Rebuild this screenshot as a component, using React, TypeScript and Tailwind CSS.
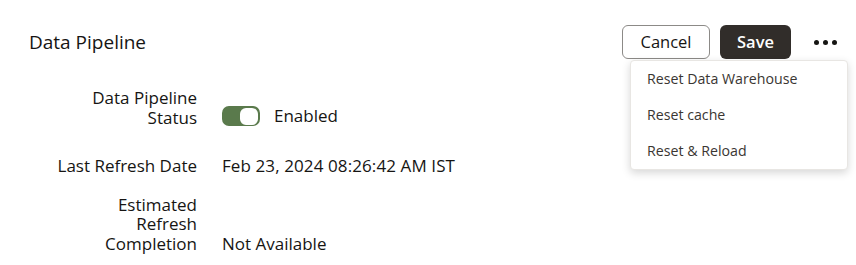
import React from "react";

const menuItems = ["Reset Data Warehouse", "Reset cache", "Reset & Reload"];

export default function App() {
  return (
    <div
      className="relative w-[856px] h-[265px] bg-white text-[#161513] overflow-hidden"
      style={{ fontFamily: '"Open Sans", "Noto Sans", sans-serif' }}
    >
      {/* Header */}
      <header className="flex items-center justify-between pl-[29px] pr-[13px] pt-[25px]">
        <h1 className="text-[19px] leading-[34px]">Data Pipeline</h1>
        <div className="flex items-center">
          <button className="h-[34px] w-[88px] rounded-[6px] border border-[#8c8a87] text-[16.5px] leading-none">
            Cancel
          </button>
          <button className="ml-[10px] h-[34px] w-[71px] rounded-[6px] bg-[#312d2a] text-white text-[16.5px] font-semibold leading-none">
            Save
          </button>
          <button className="ml-[16px] flex h-[34px] w-[36px] items-center justify-center gap-[4px]">
            <span className="h-[5px] w-[5px] rounded-full bg-[#161513]" />
            <span className="h-[5px] w-[5px] rounded-full bg-[#161513]" />
            <span className="h-[5px] w-[5px] rounded-full bg-[#161513]" />
          </button>
        </div>
      </header>

      {/* Actions menu */}
      <div className="absolute left-[630px] top-[60px] w-[218px] rounded-[4px] border border-[#e8e6e3] bg-white shadow-[0_3px_8px_rgba(0,0,0,0.16)]">
        {menuItems.map((item) => (
          <div key={item} className="h-[36px] px-[16px] text-[14.2px] leading-[36px] text-[#3a3632]">
            {item}
          </div>
        ))}
      </div>

      {/* Form */}
      <div className="mt-[29px] flex flex-col text-[17px] leading-[19.5px]">
        <div className="flex items-end">
          <div className="w-[197px] shrink-0 text-right">
            Data Pipeline
            <br />
            Status
          </div>
          <div className="ml-[25px] flex items-center pb-[1px]">
            <span className="relative flex h-[20px] w-[38px] items-center justify-end rounded-[7px] bg-[#5a7a4c] pr-[2px]">
              <span className="h-[17px] w-[18px] rounded-[6px] bg-white" />
            </span>
            <span className="ml-[14px]">Enabled</span>
          </div>
        </div>

        <div className="mt-[29px] flex items-end">
          <div className="w-[197px] shrink-0 text-right">Last Refresh Date</div>
          <div className="ml-[25px] tracking-[0.1px]">Feb 23, 2024 08:26:42 AM IST</div>
        </div>

        <div className="mt-[19px] flex items-end">
          <div className="w-[197px] shrink-0 text-right">
            Estimated
            <br />
            Refresh
            <br />
            Completion
          </div>
          <div className="ml-[25px]">Not Available</div>
        </div>
      </div>
    </div>
  );
}
